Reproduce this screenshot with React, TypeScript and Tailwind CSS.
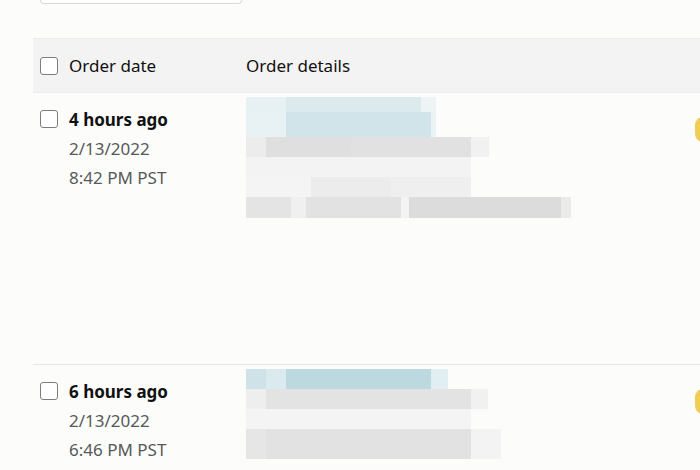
import React from "react";

type Cell = [number, string];
type MRow = { h: number; cells: Cell[] };

const mosaic1: MRow[] = [
  { h: 15, cells: [[40, "#e7f0f3"], [135, "#dceaee"], [15, "#eef4f6"]] },
  { h: 25, cells: [[40, "#e8f1f4"], [145, "#d0e4ea"], [5, "#eaf2f4"]] },
  { h: 20, cells: [[20, "#ececec"], [85, "#dfdfdf"], [120, "#e1e1e1"], [18, "#f1f1f1"]] },
  { h: 20, cells: [[225, "#f3f3f3"]] },
  { h: 20, cells: [[65, "#f4f4f4"], [80, "#ececec"], [80, "#efefef"]] },
  { h: 21, cells: [[45, "#e4e4e4"], [15, "#f0f0f0"], [95, "#e2e2e2"], [8, "#f3f3f3"], [152, "#dcdcdc"], [10, "#ebebeb"]] },
];

const mosaic2: MRow[] = [
  { h: 20, cells: [[20, "#cfe2e8"], [20, "#dbeaee"], [145, "#bcd9e0"], [17, "#e1eef2"]] },
  { h: 20, cells: [[20, "#eeeeee"], [205, "#e3e3e3"], [17, "#f1f1f1"]] },
  { h: 20, cells: [[225, "#f4f4f4"]] },
  { h: 30, cells: [[20, "#e6e6e6"], [205, "#e2e2e2"], [30, "#f3f3f3"]] },
];

function Mosaic({ rows }: { rows: MRow[] }) {
  return (
    <div className="flex flex-col blur-[0.6px]">
      {rows.map((r, i) => (
        <div key={i} className="flex" style={{ height: r.h }}>
          {r.cells.map((c, j) => (
            <div key={j} style={{ width: c[0], backgroundColor: c[1] }} />
          ))}
        </div>
      ))}
    </div>
  );
}

function Box() {
  return <div className="w-[18px] h-[18px] shrink-0 rounded-[3px] border-[1.5px] border-[#7d7d7d] bg-white" />;
}

function OrderRow({ ago, date, time, rows, height }: { ago: string; date: string; time: string; rows: MRow[]; height: string }) {
  return (
    <div className={`flex ${height}`}>
      <div className="w-[213px] shrink-0 pl-[7px] pt-[17px] flex gap-[11px]">
        <Box />
        <div className="flex flex-col -mt-[5px] text-[17px] leading-[29px]">
          <span className="font-bold text-[#111111]">{ago}</span>
          <span className="text-[#565959]">{date}</span>
          <span className="text-[#565959]">{time}</span>
        </div>
      </div>
      <div className="w-[449px] shrink-0 pt-[4px]">
        <Mosaic rows={rows} />
      </div>
      <div className="w-[120px] shrink-0 pt-[24px]">
        <div className="h-[25px] rounded-[8px] bg-[#f0cd55] blur-[0.6px]" />
      </div>
    </div>
  );
}

export default function App() {
  return (
    <div className="w-[700px] h-[470px] overflow-hidden bg-[#fcfcfb]" style={{ fontFamily: '"Noto Sans", "Open Sans", Arial, sans-serif' }}>
      <div className="ml-[40px] w-[202px] h-[4px] border-x border-b border-[#d9d9d9] rounded-b-[6px] bg-white" />
      <div className="ml-[33px] mt-[34px] w-[700px] h-[55px] bg-[#f3f3f3] border-y border-[#ececec] flex items-center">
        <div className="w-[213px] shrink-0 pl-[7px] flex items-center gap-[11px]">
          <Box />
          <span className="text-[17px] text-[#111111]">Order date</span>
        </div>
        <span className="text-[17px] text-[#111111]">Order details</span>
      </div>
      <div className="ml-[33px] w-[800px]">
        <OrderRow ago="4 hours ago" date="2/13/2022" time="8:42 PM PST" rows={mosaic1} height="h-[271px]" />
        <div className="border-t border-[#e6e6e6]" />
        <OrderRow ago="6 hours ago" date="2/13/2022" time="6:46 PM PST" rows={mosaic2} height="h-[110px]" />
      </div>
    </div>
  );
}
